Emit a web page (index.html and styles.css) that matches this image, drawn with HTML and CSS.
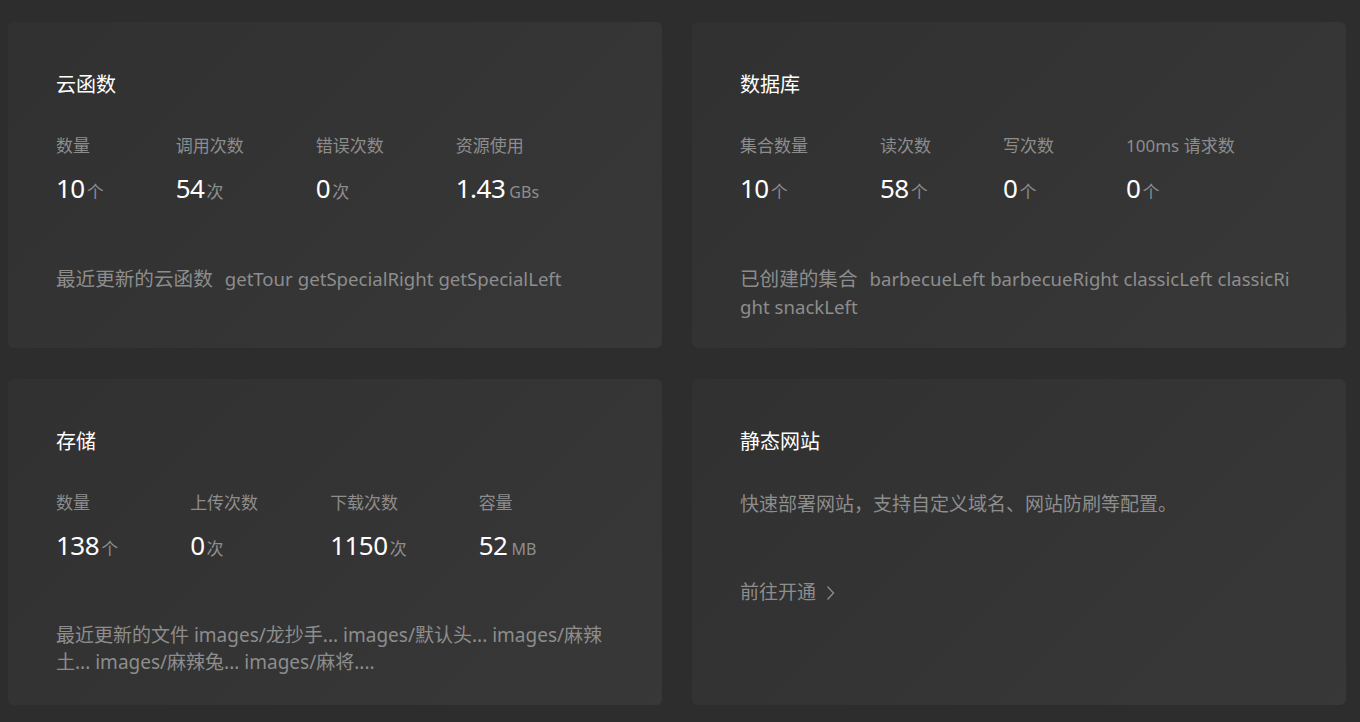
FILE: index.html
```html
<!DOCTYPE html>
<html lang="zh-CN">
<head>
<meta charset="utf-8">
<title>概览</title>
<link rel="stylesheet" href="styles.css">
</head>
<body>
<main class="grid">
  <section class="card">
    <h2 class="title">云函数</h2>
    <div class="stats">
      <div class="stat"><div class="label">数量</div><div class="value">10<span class="unit">个</span></div></div>
      <div class="stat"><div class="label">调用次数</div><div class="value">54<span class="unit">次</span></div></div>
      <div class="stat"><div class="label">错误次数</div><div class="value">0<span class="unit">次</span></div></div>
      <div class="stat"><div class="label">资源使用</div><div class="value">1.43<span class="unit small">GBs</span></div></div>
    </div>
    <p class="desc"><span class="lead">最近更新的云函数</span> <span class="item">getTour</span> <span class="item">getSpecialRight</span> <span class="item">getSpecialLeft</span></p>
  </section>
  <section class="card">
    <h2 class="title">数据库</h2>
    <div class="stats">
      <div class="stat"><div class="label">集合数量</div><div class="value">10<span class="unit">个</span></div></div>
      <div class="stat"><div class="label">读次数</div><div class="value">58<span class="unit">个</span></div></div>
      <div class="stat"><div class="label">写次数</div><div class="value">0<span class="unit">个</span></div></div>
      <div class="stat"><div class="label">100ms 请求数</div><div class="value">0<span class="unit">个</span></div></div>
    </div>
    <p class="desc breakall"><span class="lead">已创建的集合</span> <span class="item">barbecueLeft</span> <span class="item">barbecueRight</span> <span class="item">classicLeft</span> <span class="item">classicRight</span> <span class="item">snackLeft</span></p>
  </section>
  <section class="card">
    <h2 class="title">存储</h2>
    <div class="stats">
      <div class="stat"><div class="label">数量</div><div class="value">138<span class="unit">个</span></div></div>
      <div class="stat"><div class="label">上传次数</div><div class="value">0<span class="unit">次</span></div></div>
      <div class="stat"><div class="label">下载次数</div><div class="value">1150<span class="unit">次</span></div></div>
      <div class="stat"><div class="label">容量</div><div class="value">52<span class="unit small">MB</span></div></div>
    </div>
    <p class="desc">最近更新的文件 images/龙抄手... images/默认头... images/麻辣土... images/麻辣兔... images/麻将....</p>
  </section>
  <section class="card">
    <h2 class="title">静态网站</h2>
    <p class="intro">快速部署网站，支持自定义域名、网站防刷等配置。</p>
    <a class="link" href="#">前往开通<svg class="chev" width="9" height="16" viewBox="0 0 9 16"><path d="M1.5 1.5 L7.5 8 L1.5 14.5" fill="none" stroke="currentColor" stroke-width="1.3"/></svg></a>
  </section>
</main>
</body>
</html>
```

FILE: styles.css
```css
* { box-sizing: border-box; }
html, body { margin: 0; padding: 0; }
body {
  background: #2d2d2d;
  font-family: "Noto Sans", "Noto Sans CJK SC", sans-serif;
  color: #8d8d8d;
  width: 1360px;
  height: 722px;
  overflow: hidden;
}
.grid {
  display: grid;
  grid-template-columns: 654px 654px;
  grid-auto-rows: 326px;
  column-gap: 30px;
  row-gap: 31px;
  padding: 22px 14px 0 8px;
}
.card {
  background: linear-gradient(135deg, #313131 0%, #343434 50%, #383838 100%);
  border-radius: 6px;
  padding: 48px 48px 0 48px;
}
.title {
  margin: 0;
  font-size: 20px;
  line-height: 28px;
  font-weight: 400;
  color: #ffffff;
  padding-top: 1px;
}
.stats {
  display: flex;
  gap: 72px;
  margin-top: 35px;
}
.label {
  font-size: 17px;
  line-height: 24px;
  color: #8d8d8d;
  white-space: nowrap;
}
.value {
  margin-top: 12px;
  font-size: 26px;
  line-height: 36px;
  color: #ffffff;
  white-space: nowrap;
  letter-spacing: -0.5px;
}
.unit {
  font-size: 17px;
  color: #8d8d8d;
  margin-left: 2px;
  letter-spacing: 0;
}
.unit.small {
  font-size: 16px;
  margin-left: 4px;
}
.desc {
  margin: 55px 0 0 0;
  font-size: 19px;
  line-height: 27px;
  color: #8d8d8d;
}
.desc .lead { font-size: 19.6px; margin-right: 7px; }
.desc .item { font-size: 18.6px; }
.breakall { word-break: break-all; }
.intro {
  margin: 35px 0 0 0;
  font-size: 19px;
  line-height: 27px;
  color: #8d8d8d;
}
.link {
  display: inline-flex;
  align-items: center;
  gap: 10px;
  margin-top: 61px;
  font-size: 19px;
  line-height: 27px;
  color: #8d8d8d;
  text-decoration: none;
}
.chev { display: block; }
```
